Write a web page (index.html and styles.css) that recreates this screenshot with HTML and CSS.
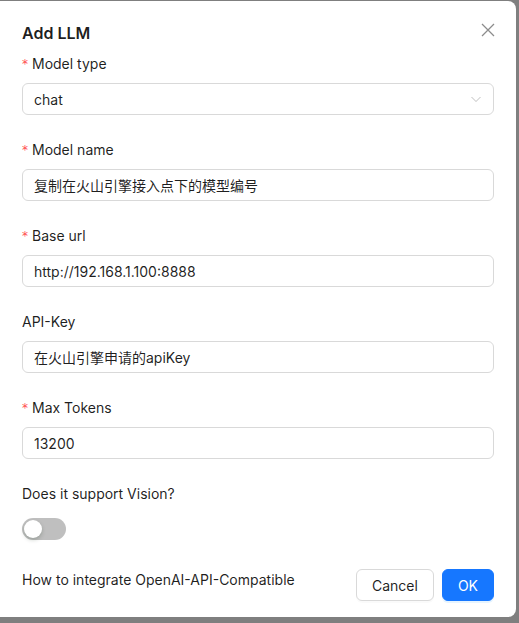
FILE: index.html
```html
<!DOCTYPE html>
<html>
<head>
<meta charset="utf-8">
<link rel="stylesheet" href="styles.css">
</head>
<body>
<div class="modal">
  <div class="header">
    <div class="title">Add LLM</div>
    <button class="close" aria-label="Close">
      <svg width="14" height="14" viewBox="0 0 14 14"><path d="M1 1L13 13M13 1L1 13" stroke="currentColor" stroke-width="1.3" fill="none"/></svg>
    </button>
  </div>
  <form class="form">
    <div class="item">
      <label class="label"><span class="req">*</span>Model type</label>
      <div class="control">
        <div class="select">
          <span>chat</span>
          <svg class="arrow" width="12" height="12" viewBox="0 0 12 12"><path d="M1.5 4L6 8.5L10.5 4" stroke="currentColor" stroke-width="1" fill="none"/></svg>
        </div>
      </div>
    </div>
    <div class="item">
      <label class="label"><span class="req">*</span>Model name</label>
      <div class="control"><div class="input">复制在火山引擎接入点下的模型编号</div></div>
    </div>
    <div class="item">
      <label class="label"><span class="req">*</span>Base url</label>
      <div class="control"><div class="input">http://192.168.1.100:8888</div></div>
    </div>
    <div class="item">
      <label class="label">API-Key</label>
      <div class="control"><div class="input">在火山引擎申请的apiKey</div></div>
    </div>
    <div class="item">
      <label class="label"><span class="req">*</span>Max Tokens</label>
      <div class="control"><div class="input">13200</div></div>
    </div>
    <div class="item">
      <label class="label">Does it support Vision?</label>
      <div class="control"><span class="switch"><span class="knob"></span></span></div>
    </div>
  </form>
  <div class="footer">
    <span class="link">How to integrate OpenAI-API-Compatible</span>
    <div class="buttons">
      <button class="btn">Cancel</button>
      <button class="btn primary">OK</button>
    </div>
  </div>
</div>
</body>
</html>
```
FILE: styles.css
```css
* { box-sizing: border-box; }
html, body {
  margin: 0;
  padding: 0;
  background: #7f7f7f;
  height: 623px;
  overflow: hidden;
}
body {
  font-family: Inter, "Noto Sans CJK SC", sans-serif;
  font-size: 14px;
  color: rgba(0, 0, 0, 0.88);
  padding-top: 1px;
}
.modal {
  width: 516px;
  background: #fff;
  border-radius: 0 8px 8px 0;
  padding: 20px 22px 16px 22px;
  position: relative;
}
.header {
  margin-bottom: 8px;
  height: 24px;
}
.title {
  font-size: 16px;
  font-weight: 600;
  line-height: 24px;
  height: 24px;
}
.close {
  position: absolute;
  top: 18px;
  right: 17px;
  width: 22px;
  height: 22px;
  border: 0;
  background: transparent;
  padding: 0;
  color: rgba(0, 0, 0, 0.45);
  display: flex;
  align-items: center;
  justify-content: center;
}
.item {
  margin-bottom: 24px;
}
.label {
  display: flex;
  align-items: center;
  height: 22px;
  line-height: 22px;
  margin-bottom: 8px;
}
.req {
  color: #ff4d4f;
  font-family: "DejaVu Sans", sans-serif;
  font-size: 12px;
  line-height: 1;
  margin-right: 4px;
}
.control {
  height: 32px;
  display: flex;
  align-items: center;
}
.input, .select {
  width: 100%;
  height: 32px;
  border: 1px solid #d9d9d9;
  border-radius: 6px;
  padding: 0 11px;
  display: flex;
  align-items: center;
  white-space: nowrap;
  overflow: hidden;
}
.select {
  justify-content: space-between;
}
.arrow {
  color: rgba(0, 0, 0, 0.25);
}
.switch {
  display: inline-block;
  width: 44px;
  height: 22px;
  border-radius: 11px;
  background: rgba(0, 0, 0, 0.25);
  position: relative;
}
.knob {
  position: absolute;
  top: 2px;
  left: 2px;
  width: 18px;
  height: 18px;
  border-radius: 50%;
  background: #fff;
  box-shadow: 0 2px 4px rgba(0, 35, 11, 0.2);
}
.footer {
  display: flex;
  justify-content: space-between;
  align-items: flex-start;
  height: 32px;
}
.link {
  line-height: 22px;
  height: 22px;
}
.buttons {
  display: flex;
  gap: 8px;
}
.btn {
  height: 32px;
  padding: 0 15px;
  border-radius: 6px;
  border: 1px solid #d9d9d9;
  background: #fff;
  font-family: Inter, "Noto Sans CJK SC", sans-serif;
  font-size: 14px;
  color: rgba(0, 0, 0, 0.88);
  box-shadow: 0 2px 0 rgba(0, 0, 0, 0.02);
}
.btn.primary {
  background: #1677ff;
  border-color: #1677ff;
  color: #fff;
  box-shadow: 0 2px 0 rgba(5, 145, 255, 0.1);
}
```
